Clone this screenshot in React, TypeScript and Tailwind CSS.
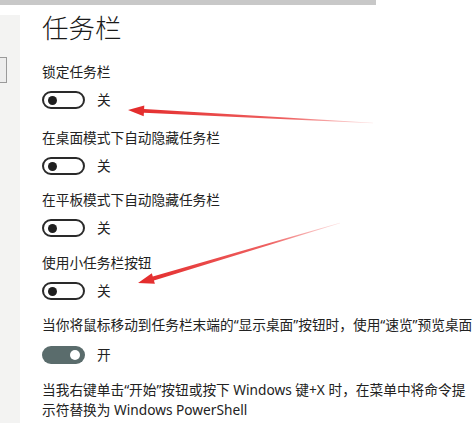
const font = "font-['Noto_Sans','Noto_Sans_CJK_SC',sans-serif]"

function Toggle({ on }: { on: boolean }) {
  return (
    <div className="flex items-center h-5">
      {on ? (
        <div className="w-[43px] h-[18px] rounded-full bg-[#5a6c6c] flex items-center justify-end pr-[5px]">
          <span className="w-[10px] h-[10px] rounded-full bg-white" />
        </div>
      ) : (
        <div className="w-[43px] h-[18px] rounded-full border-2 border-[#2a2a2a] flex items-center pl-[4px]">
          <span className="w-[9px] h-[9px] rounded-full bg-[#1f1f1f]" />
        </div>
      )}
      <span className="ml-[12px] text-[13.7px] text-[#222]">{on ? '开' : '关'}</span>
    </div>
  )
}

function Arrow({ tail, tip, id }: { tail: [number, number]; tip: [number, number]; id: string }) {
  const dx = tip[0] - tail[0]
  const dy = tip[1] - tail[1]
  const len = Math.hypot(dx, dy)
  const ux = dx / len
  const uy = dy / len
  const nx = -uy
  const ny = ux
  const head = 16
  const bx = tip[0] - ux * head
  const by = tip[1] - uy * head
  const p = (x: number, y: number) => `${x.toFixed(1)},${y.toFixed(1)}`
  const pts = [
    p(tail[0] + nx * 0.3, tail[1] + ny * 0.3),
    p(bx + nx * 2, by + ny * 2),
    p(bx + nx * 5.5, by + ny * 5.5),
    p(tip[0], tip[1]),
    p(bx - nx * 5.5, by - ny * 5.5),
    p(bx - nx * 2, by - ny * 2),
    p(tail[0] - nx * 0.3, tail[1] - ny * 0.3),
  ].join(' ')
  return (
    <>
      <defs>
        <linearGradient id={id} gradientUnits="userSpaceOnUse" x1={tail[0]} y1={tail[1]} x2={tip[0]} y2={tip[1]}>
          <stop offset="0" stopColor="#f05050" stopOpacity={0.15} />
          <stop offset="0.35" stopColor="#ea3a3a" stopOpacity={0.8} />
          <stop offset="1" stopColor="#e32a2a" />
        </linearGradient>
      </defs>
      <polygon points={pts} fill={`url(#${id})`} />
    </>
  )
}

export default function App() {
  return (
    <div className={`relative w-[475px] h-[441px] bg-white overflow-hidden ${font}`}>
      {/* top scroll strip */}
      <div className="h-[5px] w-[376px] bg-[#c8c8c8]" />

      <div className="flex items-start">
        {/* left nav strip */}
        <div className="mt-[10px] w-[20px] h-[408px] bg-[#f3f3f2] pt-[42px]">
          <div className="w-[7px] h-[26px] border border-l-0 border-[#9a9a9a] bg-[#ededed]" />
        </div>

        <div className="pl-[22px] flex flex-col text-[#222]">
          <h1 className="mt-[7px] text-[26.5px] leading-8 font-light text-[#1a1a1a]">任务栏</h1>

          <p className="mt-[18px] text-[13.7px] leading-5">锁定任务栏</p>
          <div className="mt-[8px]"><Toggle on={false} /></div>

          <p className="mt-[18px] text-[13.7px] leading-5">在桌面模式下自动隐藏任务栏</p>
          <div className="mt-[8px]"><Toggle on={false} /></div>

          <p className="mt-[14px] text-[13.7px] leading-5">在平板模式下自动隐藏任务栏</p>
          <div className="mt-[8px]"><Toggle on={false} /></div>

          <p className="mt-[15px] text-[13.7px] leading-5">使用小任务栏按钮</p>
          <div className="mt-[8px]"><Toggle on={false} /></div>

          <p className="mt-[14px] text-[13.7px] leading-5 whitespace-nowrap">
            当你将鼠标移动到任务栏末端的“显示桌面”按钮时，使用“速览”预览桌面
          </p>
          <div className="mt-[10px]"><Toggle on={true} /></div>

          <p className="mt-[15px] w-[432px] text-[13.7px] leading-5">
            当我右键单击“开始”按钮或按下 Windows 键+X 时，在菜单中将命令提示符替换为 Windows PowerShell
          </p>
        </div>
      </div>

      {/* annotation arrows */}
      <svg className="absolute inset-0 pointer-events-none" width="475" height="441">
        <Arrow id="a1" tail={[373, 123]} tip={[128, 110]} />
        <Arrow id="a2" tail={[340, 223]} tip={[138, 283]} />
      </svg>
    </div>
  )
}
